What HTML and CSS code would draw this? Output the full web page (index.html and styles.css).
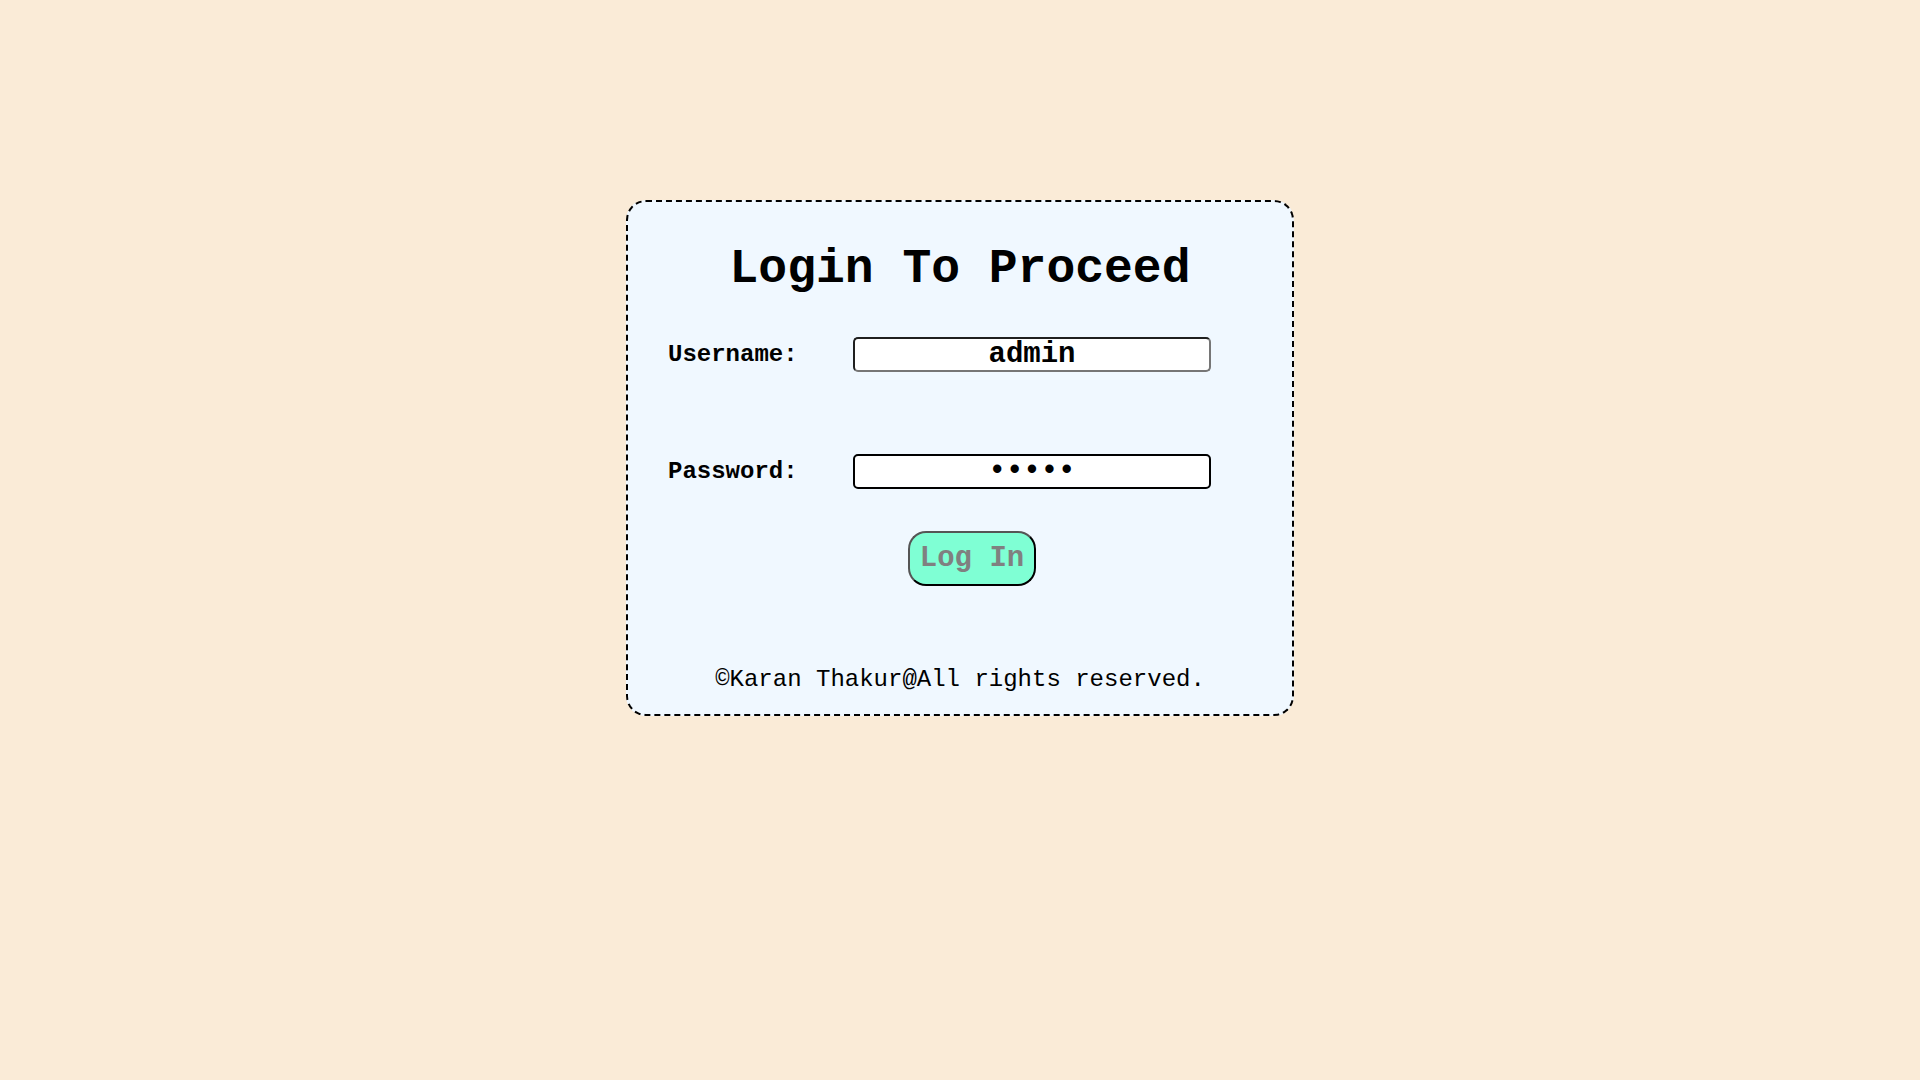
FILE: index.html
```html
<!DOCTYPE html>
<html lang="en">
<head>
<meta charset="utf-8">
<title>Login</title>
<link rel="stylesheet" href="styles.css">
</head>
<body>
<div class="card">
  <h1 class="title">Login To Proceed</h1>
  <form class="form">
    <div class="row">
      <label class="label" for="user">Username:</label>
      <input class="field field-user" id="user" type="text" value="admin">
    </div>
    <div class="row row-pass">
      <label class="label" for="pass">Password:</label>
      <input class="field field-pass" id="pass" type="password" value="admin">
    </div>
    <div class="actions">
      <button class="btn" type="button">Log In</button>
    </div>
  </form>
  <p class="footer">©Karan Thakur@All rights reserved.</p>
</div>
</body>
</html>
```
FILE: styles.css
```css
html, body {
  margin: 0;
  padding: 0;
}
body {
  background: #faebd7;
  font-family: "Liberation Mono", "Courier New", monospace;
  color: #000;
}
.card {
  box-sizing: border-box;
  width: 668px;
  margin: 200px auto 0;
  padding: 40px 0 21px;
  background: #f0f8ff;
  border: 2px dashed #000;
  border-radius: 20px;
}
.title {
  margin: 0;
  font-size: 48px;
  font-weight: bold;
  line-height: normal;
  text-align: center;
}
.form {
  margin: 0;
}
.row {
  display: grid;
  grid-template-columns: 185px 358px;
  align-items: center;
  padding-left: 40px;
  margin-top: 41px;
}
.row-pass {
  margin-top: 82px;
}
.label {
  font-size: 24px;
  font-weight: bold;
  line-height: normal;
}
.field {
  box-sizing: border-box;
  width: 358px;
  height: 35px;
  padding: 0;
  margin: 0;
  font-family: "Liberation Mono", "Courier New", monospace;
  font-size: 29px;
  font-weight: bold;
  color: #000;
  text-align: center;
  background: #fff;
  border-radius: 5px;
  border-width: 2px;
  border-style: solid;
  outline: none;
}
.field-user {
  border-color: #1f1f1f #767676 #767676 #1f1f1f;
}
.field-pass {
  border-color: #000;
}
.actions {
  display: flex;
  justify-content: center;
  margin-top: 42px;
  padding-left: 24px;
}
.btn {
  box-sizing: border-box;
  height: 55px;
  width: 128px;
  padding: 0;
  font-family: "Liberation Mono", "Courier New", monospace;
  font-size: 29px;
  font-weight: bold;
  color: #808080;
  background: #7fffd4;
  border-width: 2px;
  border-style: solid;
  border-color: #555 #000 #000 #555;
  border-radius: 18px;
}
.footer {
  margin: 80px 0 0;
  font-size: 24px;
  line-height: normal;
  text-align: center;
}
```
